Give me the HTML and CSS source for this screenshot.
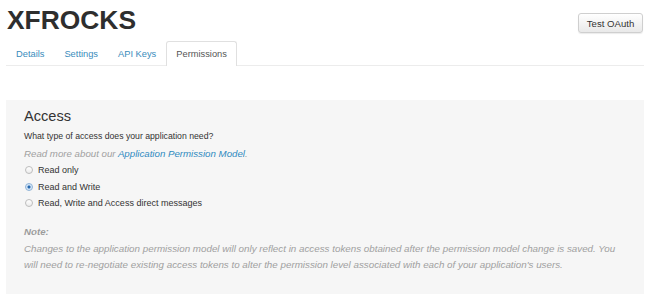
FILE: index.html
```html
<!DOCTYPE html>
<html>
<head>
<meta charset="utf-8">
<link rel="stylesheet" href="styles.css">
</head>
<body>
<div class="page">
  <header class="header">
    <h1 class="title">XFROCKS</h1>
    <button class="btn">Test OAuth</button>
  </header>
  <nav class="tabs">
    <a class="tab">Details</a>
    <a class="tab">Settings</a>
    <a class="tab">API Keys</a>
    <a class="tab active">Permissions</a>
  </nav>
  <section class="panel">
    <h2 class="heading">Access</h2>
    <p class="question">What type of access does your application need?</p>
    <p class="hint">Read more about our <a class="link">Application Permission Model</a>.</p>
    <div class="options">
      <label class="option"><span class="radio"></span>Read only</label>
      <label class="option"><span class="radio checked"></span>Read and Write</label>
      <label class="option"><span class="radio"></span>Read, Write and Access direct messages</label>
    </div>
    <p class="note-label">Note:</p>
    <p class="note">Changes to the application permission model will only reflect in access tokens obtained after the permission model change is saved. You will need to re-negotiate existing access tokens to alter the permission level associated with each of your application's users.</p>
  </section>
</div>
</body>
</html>
```

FILE: styles.css
```css
html, body {
  margin: 0;
  padding: 0;
  background: #fff;
}
body {
  font-family: "Liberation Sans", Arial, sans-serif;
  color: #333;
}
.page {
  width: 651px;
}
.header {
  display: flex;
  justify-content: space-between;
  align-items: flex-start;
  padding: 5px 8px 0 7px;
  height: 36px;
}
.title {
  margin: 0;
  font-size: 26.4px;
  line-height: 30px;
  font-weight: 700;
  color: #2e2e2e;
}
.btn {
  margin-top: 8px;
  width: 65px;
  height: 20px;
  padding: 0;
  font-family: "Liberation Sans", Arial, sans-serif;
  font-size: 9.6px;
  color: #333;
  background: linear-gradient(#ffffff, #e9e9e9);
  border: 1px solid #cfcfcf;
  border-radius: 3px;
  box-shadow: 0 1px 1px rgba(0,0,0,0.08);
}
.tabs {
  display: flex;
  margin: 0 7px 0 6px;
  border-bottom: 1px solid #ececec;
  height: 24px;
}
.tab {
  display: block;
  padding: 0 9px;
  font-size: 9.3px;
  line-height: 24px;
  color: #3a8cbc;
  border: 1px solid transparent;
  border-bottom: none;
  margin-bottom: -1px;
  border-radius: 3px 3px 0 0;
}
.tab.active {
  color: #555;
  background: #fff;
  border-color: #e0e0e0;
  height: 24px;
}
.panel {
  margin: 34px 7px 0 6px;
  background: #f6f6f6;
  padding: 7px 16px 21px 18px;
}
.heading {
  margin: 0;
  font-size: 14.6px;
  line-height: 18px;
  font-weight: 400;
  color: #333;
}
.question {
  margin: 3px 0 0;
  font-size: 8.7px;
  line-height: 16px;
  color: #333;
}
.hint {
  margin: 2px 0 0;
  font-size: 9.7px;
  line-height: 16px;
  font-style: italic;
  color: #a0a0a0;
}
.link {
  color: #2f8ac0;
}
.options {
  display: flex;
  flex-direction: column;
}
.option {
  display: flex;
  align-items: center;
  height: 16.5px;
  font-size: 9px;
  color: #333;
}
.radio {
  width: 6px;
  height: 6px;
  border: 1px solid #bdbdbd;
  border-radius: 50%;
  background: linear-gradient(#ffffff, #ececec);
  margin: 0 5px 0 1px;
}
.radio.checked {
  border-color: #8eb3d8;
  background: radial-gradient(circle, #1d5fa6 0, #2a6db3 1.3px, #cfe2f5 1.8px, #e4eef9 100%);
}
.note-label {
  margin: 12px 0 0;
  font-size: 9.7px;
  line-height: 16px;
  font-weight: 700;
  font-style: italic;
  color: #9c9c9c;
}
.note {
  margin: 1px 0 0;
  font-size: 9.8px;
  line-height: 16px;
  font-style: italic;
  color: #a0a0a0;
}
```
